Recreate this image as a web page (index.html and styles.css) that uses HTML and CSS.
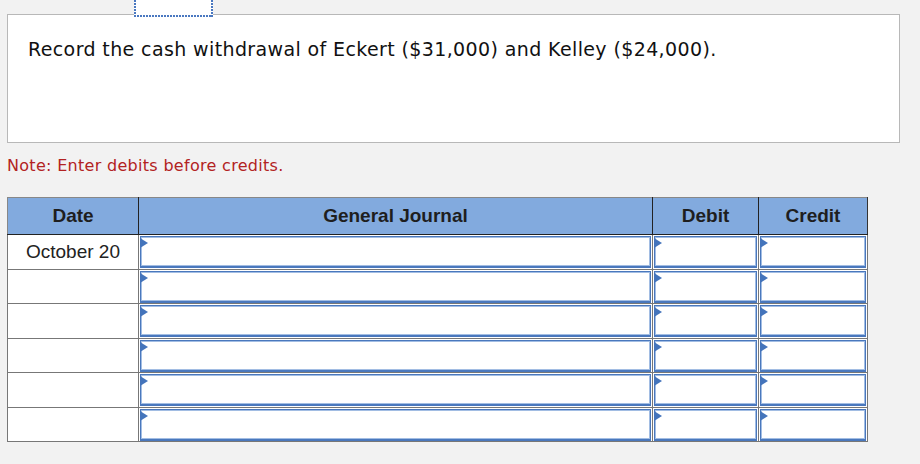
FILE: index.html
```html
<!DOCTYPE html>
<html>
<head>
<meta charset="utf-8">
<link rel="stylesheet" href="styles.css">
</head>
<body>
<div class="page">
  <div class="focus-tab"></div>
  <div class="prompt">Record the cash withdrawal of Eckert ($31,000) and Kelley ($24,000).</div>
  <p class="note">Note: Enter debits before credits.</p>
  <table class="journal">
    <colgroup>
      <col class="c-date"><col class="c-acct"><col class="c-debit"><col class="c-credit">
    </colgroup>
    <thead>
      <tr><th>Date</th><th>General Journal</th><th>Debit</th><th>Credit</th></tr>
    </thead>
    <tbody>
      <tr><td class="date">October 20</td><td class="in"><div class="field"></div></td><td class="in"><div class="field"></div></td><td class="in"><div class="field"></div></td></tr>
      <tr><td class="date"></td><td class="in"><div class="field"></div></td><td class="in"><div class="field"></div></td><td class="in"><div class="field"></div></td></tr>
      <tr><td class="date"></td><td class="in"><div class="field"></div></td><td class="in"><div class="field"></div></td><td class="in"><div class="field"></div></td></tr>
      <tr><td class="date"></td><td class="in"><div class="field"></div></td><td class="in"><div class="field"></div></td><td class="in"><div class="field"></div></td></tr>
      <tr><td class="date"></td><td class="in"><div class="field"></div></td><td class="in"><div class="field"></div></td><td class="in"><div class="field"></div></td></tr>
      <tr><td class="date"></td><td class="in"><div class="field"></div></td><td class="in"><div class="field"></div></td><td class="in"><div class="field"></div></td></tr>
    </tbody>
  </table>
</div>
</body>
</html>
```
FILE: styles.css
```css
html, body {
  margin: 0;
  padding: 0;
  background: #f2f2f2;
}
.page {
  position: relative;
  padding: 14px 0 0 7px;
}
.focus-tab {
  position: absolute;
  left: 134px;
  top: 0;
  width: 79px;
  height: 17px;
  z-index: 2;
  background:
    repeating-linear-gradient(to bottom, #4a78c0 0 2px, transparent 2px 3px) left top / 2px 100% no-repeat,
    repeating-linear-gradient(to bottom, #4a78c0 0 2px, transparent 2px 3px) right top / 2px 100% no-repeat,
    repeating-linear-gradient(to right, #4a78c0 0 2px, transparent 2px 3px) left bottom / 100% 2px no-repeat,
    #fff;
}
.prompt {
  box-sizing: border-box;
  width: 893px;
  height: 129px;
  background: #fff;
  border: 1px solid #b8b8b8;
  padding: 22px 0 0 20px;
  font-family: "DejaVu Sans", Verdana, sans-serif;
  font-size: 19px;
  letter-spacing: 0.38px;
  line-height: 24px;
  color: #111;
}
.note {
  margin: 13px 0 0 0;
  font-family: "DejaVu Sans", Verdana, sans-serif;
  font-size: 16px;
  letter-spacing: 0.3px;
  line-height: 20px;
  color: #b22222;
}
.journal {
  margin-top: 21px;
  border-collapse: collapse;
  table-layout: fixed;
  width: 861px;
  font-family: "Liberation Sans", Arial, sans-serif;
  font-size: 19px;
  color: #222;
  background: #fff;
}
.c-date { width: 131px; }
.c-acct { width: 514px; }
.c-debit { width: 106px; }
.c-credit { width: 109px; }
.journal th {
  height: 36px;
  padding: 0;
  background: #82aade;
  font-weight: bold;
  text-align: center;
  color: #1e1e1e;
  border-left: 1px solid #222;
  border-right: 1px solid #222;
  border-top: 1px solid #888;
  border-bottom: 1px solid #222;
}
.journal th:first-child { border-left-color: #888; }
.journal th:last-child { border-right-color: #333; }
.journal tbody tr {
  height: 34.5px;
}
.journal td {
  padding: 0;
  border: 1px solid #777;
}
.journal td.date {
  text-align: center;
  color: #222;
}
.journal td.in {
  padding: 1px 1px 0 1px;
}
.field {
  position: relative;
  box-sizing: border-box;
  height: 32px;
  background: #fff;
  border: 1px solid #4a78bd;
  border-bottom-width: 2px;
  box-shadow: inset 0 0 0 1px #a2bde3;
}
.field::before {
  content: "";
  position: absolute;
  left: -1px;
  top: 1px;
  width: 0;
  height: 0;
  border-top: 5px solid transparent;
  border-bottom: 5px solid transparent;
  border-left: 8px solid #4474bb;
}
```
